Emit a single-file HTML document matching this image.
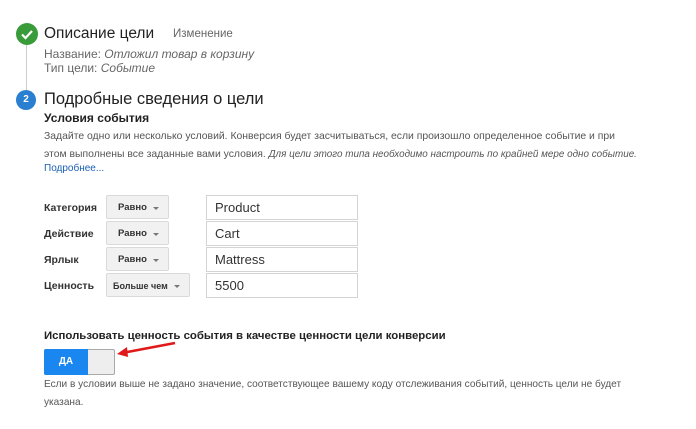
<!DOCTYPE html><html><head><meta charset="utf-8"><style>
body{margin:0;width:696px;height:429px;background:#fff;font-family:"Liberation Sans",sans-serif;position:relative;overflow:hidden;color:#222}
.a{position:absolute;white-space:nowrap}
.dd{position:absolute;left:106px;width:63px;height:24px;background:#f1f1f1;border:1px solid #d9d9d9;border-radius:2px;font-size:9.5px;font-weight:bold;color:#333;line-height:24px;box-sizing:border-box;padding-left:11px}
.dd:after{content:"";position:absolute;right:9px;top:11px;border-left:3.5px solid transparent;border-right:3.5px solid transparent;border-top:3.5px solid #777}
.in{position:absolute;left:206px;width:152px;height:25px;border:1px solid #d4d4d4;box-sizing:border-box;font-size:13px;color:#333;line-height:23px;padding-left:8px}
.lb{position:absolute;left:44px;font-size:10.5px;font-weight:bold;color:#333}
</style></head><body>
<div class="a" style="left:16px;top:23px;width:22px;height:22px;border-radius:50%;background:#3a9b3a"></div>
<svg class="a" style="left:16px;top:23px" width="22" height="22"><path d="M6 11.5l3.5 3.5 6.5-7" stroke="#fff" stroke-width="2.2" fill="none"/></svg>
<div class="a" style="left:26px;top:45px;width:1px;height:45px;background:#ccc"></div>
<div class="a" style="left:44px;top:25px;font-size:15.5px;color:#222">Описание цели</div>
<div class="a" style="left:173px;top:28px;font-size:11.5px;color:#666">Изменение</div>
<div class="a" style="left:44px;top:47px;font-size:12px;color:#666;line-height:14px">Название: <i>Отложил товар в корзину</i><br>Тип цели: <i>Событие</i></div>
<div class="a" style="left:16px;top:90px;width:20px;height:20px;border-radius:50%;background:#2a7fd0;color:#fff;font-size:10px;font-weight:bold;text-align:center;line-height:20px">2</div>
<div class="a" style="left:44px;top:90px;font-size:16.5px;color:#222">Подробные сведения о цели</div>
<div class="a" style="left:44px;top:111px;font-size:12px;font-weight:bold;color:#222">Условия события</div>
<div class="a" style="left:44px;top:128px;font-size:10.4px;color:#555;line-height:18px">Задайте одно или несколько условий. Конверсия будет засчитываться, если произошло определенное событие и при<br>этом выполнены все заданные вами условия. <i style="font-size:9.9px">Для цели этого типа необходимо настроить по крайней мере одно событие.</i></div>
<div class="a" style="left:44px;top:163px;font-size:10px;color:#1a5fb4">Подробнее...</div>
<div class="lb" style="top:202px">Категория</div><div class="dd" style="top:195px">Равно</div><div class="in" style="top:195px">Product</div>
<div class="lb" style="top:228px">Действие</div><div class="dd" style="top:221px">Равно</div><div class="in" style="top:221px">Cart</div>
<div class="lb" style="top:254px">Ярлык</div><div class="dd" style="top:247px">Равно</div><div class="in" style="top:247px">Mattress</div>
<div class="lb" style="top:280px">Ценность</div><div class="dd" style="top:273px;width:84px;padding-left:6px;font-size:9px">Больше чем</div><div class="in" style="top:273px">5500</div>
<div class="a" style="left:44px;top:330px;font-size:11.4px;font-weight:bold;color:#222">Использовать ценность события в качестве ценности цели конверсии</div>
<div class="a" style="left:44px;top:349px;width:71px;height:26px;border:1px solid #aaa;border-radius:2px;box-sizing:border-box;background:#eee"></div>
<div class="a" style="left:44px;top:349px;width:44px;height:26px;background:#1a87f0;border-radius:2px 0 0 2px;color:#fff;font-size:10px;font-weight:bold;text-align:center;line-height:26px">ДА</div>
<svg class="a" style="left:110px;top:335px" width="80" height="30"><path d="M65 8L12 18" stroke="#e01a1a" stroke-width="2.5"/><path d="M7 19l10-7 1 10z" fill="#e01a1a"/></svg>
<div class="a" style="left:44px;top:376px;font-size:10.1px;color:#555;line-height:18px">Если в условии выше не задано значение, соответствующее вашему коду отслеживания событий, ценность цели не будет<br>указана.</div>
</body></html>
